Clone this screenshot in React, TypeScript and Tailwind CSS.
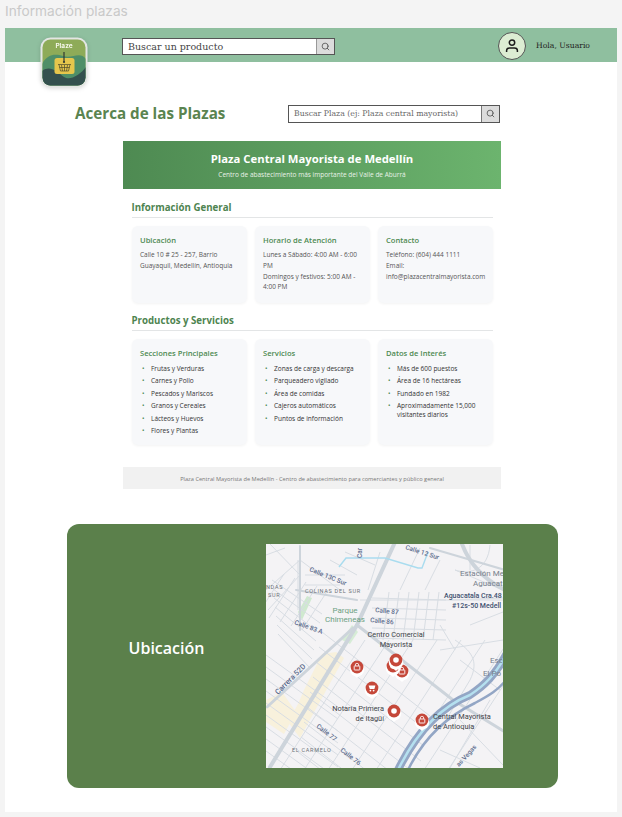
import type { ReactNode } from 'react';
import { Search } from 'lucide-react';

const sectionOne = [
  {
    title: 'Ubicación',
    lines: ['Calle 10 # 25 - 257, Barrio Guayaquil, Medellín, Antioquia'],
  },
  {
    title: 'Horario de Atención',
    lines: ['Lunes a Sábado: 4:00 AM - 6:00 PM', 'Domingos y festivos: 5:00 AM - 4:00 PM'],
  },
  {
    title: 'Contacto',
    lines: ['Teléfono: (604) 444 1111', 'Email:', 'info@plazacentralmayorista.com'],
  },
];

const sectionTwo = [
  {
    title: 'Secciones Principales',
    items: ['Frutas y Verduras', 'Carnes y Pollo', 'Pescados y Mariscos', 'Granos y Cereales', 'Lácteos y Huevos', 'Flores y Plantas'],
  },
  {
    title: 'Servicios',
    items: ['Zonas de carga y descarga', 'Parqueadero vigilado', 'Área de comidas', 'Cajeros automáticos', 'Puntos de información'],
  },
  {
    title: 'Datos de Interés',
    items: ['Más de 600 puestos', 'Área de 16 hectáreas', 'Fundado en 1982', 'Aproximadamente 15,000 visitantes diarios'],
  },
];

function Logo() {
  return (
    <svg width="48" height="51" viewBox="0 0 48 51" className="shrink-0 drop-shadow-sm">
      <defs>
        <clipPath id="logoClip">
          <rect x="2.5" y="2.5" width="43" height="46" rx="8" />
        </clipPath>
      </defs>
      <rect x="0.5" y="0.5" width="47" height="50" rx="10" fill="#e3e6e3" />
      <g clipPath="url(#logoClip)">
        <rect x="2" y="2" width="44" height="47" fill="#8eab58" />
        <path d="M2 27 C8 16 16 17 23 19 C32 22 40 14 46 22 L46 49 L2 49 Z" fill="#4f8f68" />
        <path d="M2 34 C10 28 16 34 24 40 C30 44 40 38 46 30 L46 49 L2 49 Z" fill="#34504e" />
      </g>
      <text x="24" y="11" textAnchor="middle" fontSize="6.5" fontWeight="700" fill="#f4f6e8" fontFamily="Inter, sans-serif">
        Plaze
      </text>
      <rect x="14.5" y="21" width="20" height="16" rx="2.5" fill="#e6c64c" />
      <path d="M24 15 V25" stroke="#2f3a33" strokeWidth="1.2" />
      <circle cx="24" cy="25" r="1.1" fill="#2f3a33" />
      <path
        d="M18 27.5 H31 M19 27.5 L20.5 34 H28.5 L30 27.5 M21.5 28 L22.5 34 M24.5 28 V34 M27.5 28 L26.5 34 M19.5 30.5 H29.5"
        stroke="#4d4a2a"
        strokeWidth="0.7"
        fill="none"
      />
    </svg>
  );
}

function UserIcon() {
  return (
    <svg width="16" height="16" viewBox="0 0 16 16" fill="none" stroke="#1c1c1c" strokeWidth="1.5">
      <circle cx="8" cy="4.6" r="2.7" />
      <path d="M2.6 14 V12.6 C2.6 10.8 4 10 5.6 10 H10.4 C12 10 13.4 10.8 13.4 12.6 V14" />
    </svg>
  );
}

function Pin({ x, y, kind }: { x: number; y: number; kind: 'lock' | 'cart' | 'dot' }) {
  return (
    <g>
      <circle cx={x} cy={y + 2.5} r="7.2" fill="#ffffff" />
      <path d={`M${x - 5} ${y + 6} L${x} ${y + 11} L${x + 5} ${y + 6} Z`} fill="#ffffff" />
      <circle cx={x} cy={y} r="6.4" fill="#c5483a" />
      {kind === 'dot' && <circle cx={x} cy={y} r="2.8" fill="#ffffff" />}
      {kind === 'lock' && (
        <g>
          <rect x={x - 2.8} y={y - 1} width="5.6" height="4" rx="0.5" fill="none" stroke="#ffffff" strokeWidth="0.9" />
          <path d={`M${x - 1.7} ${y - 1} V${y - 2} a1.7 1.7 0 0 1 3.4 0 V${y - 1}`} stroke="#ffffff" strokeWidth="0.8" fill="none" />
        </g>
      )}
      {kind === 'cart' && (
        <g>
          <path d={`M${x - 3.4} ${y - 2.6} H${x + 3.4} L${x + 2.4} ${y + 1} H${x - 2.2} Z`} fill="#ffffff" />
          <circle cx={x - 1.6} cy={y + 2.6} r="0.9" fill="#ffffff" />
          <circle cx={x + 1.6} cy={y + 2.6} r="0.9" fill="#ffffff" />
        </g>
      )}
    </g>
  );
}

// calles sueltas de la parte alta y de la esquina derecha
const minorRoads = [
  'M266 590 L300 560 L340 590', 'M270 544 L300 575', 'M300 575 L268 610', 'M298 560 V610',
  'M330 560 L357 575', 'M305 575 H345', 'M305 585 H340', 'M360 600 H503',
  'M380 552 L368 590', 'M420 548 L400 590', 'M440 560 L425 590', 'M450 600 L503 598', 'M455 570 L503 590', 'M470 545 V570',
  'M490 545 C488 570 470 575 455 570', 'M440 650 L503 640', 'M460 660 L500 690', 'M470 625 L503 612',
  'M470 680 L440 730', 'M490 700 L450 768', 'M460 720 L503 765', 'M440 750 L480 768', 'M455 640 C470 650 480 660 470 680',
  'M345 552 L375 565', 'M266 555 L285 548', 'M440 625 L455 650',
];

// barrio al oeste: calles diagonales y sus cruces
const westStreets = Array.from({ length: 7 }, (_, i) => {
  const y = 580 + i * 9;
  return `M${272 + i * 1} ${y} L${322 - i * 2} ${y + 34}`;
});
const westCross = Array.from({ length: 5 }, (_, i) => {
  const x = 284 + i * 11;
  return `M${x} ${574 + i * 4} L${x - 26} ${614 + i * 4}`;
});

// rejilla junto a Calle 87
const gridV = Array.from({ length: 6 }, (_, i) => {
  const x = 386 + i * 10;
  return `M${x + 3} 592 L${x - 3} 640`;
});
const gridH = Array.from({ length: 5 }, (_, i) => {
  const y = 598 + i * 10;
  return `M372 ${y} L446 ${y + 2}`;
});

// barrio al sur: calles paralelas a la vía principal y sus cruces
const southStreets = Array.from({ length: 9 }, (_, i) => {
  const y = 632 + i * 15;
  return `M${322 - i * 3} ${y} L${430 - i * 3} ${y + 84}`;
});
const southCross = Array.from({ length: 8 }, (_, i) => {
  const x = 365 + i * 24;
  return `M${x} 640 L${x - 85} 770`;
});
const carmeloStreets = Array.from({ length: 9 }, (_, i) => {
  const y = 655 + i * 12;
  return `M266 ${y} L338 ${y + 52}`;
});

const yellowBlocks = [
  'M322 654 L336 652 L344 658 L312 716 L300 738 L288 722 L298 704 L304 690 L314 670 Z',
  'M266 700 L282 692 L296 712 L284 734 L266 722 Z',
];

function MapImage() {
  return (
    <svg viewBox="266 544 237 224" className="h-[224px] w-[237px] shrink-0" fontFamily="Roboto, sans-serif">
      <rect x="266" y="544" width="237" height="224" fill="#f4f3f5" />
      {yellowBlocks.map((d) => (
        <path key={d} d={d} fill="#f8f1dc" />
      ))}
      <path d="M298 612 L307 596 L312 598 L302 620 Z" fill="#cfe9cf" />
      <path d="M342 640 L352 625 L358 632 L350 644 Z" fill="#d6ecd6" />
      <g fill="none" stroke="#d8dde3" strokeWidth="1">
        {[...minorRoads, ...westStreets, ...westCross, ...gridV, ...gridH, ...southStreets, ...southCross, ...carmeloStreets].map((d) => (
          <path key={d} d={d} />
        ))}
      </g>
      <g fill="none" stroke="#cdd4db" strokeLinecap="round">
        <path d="M396 540 L357 625 L270 767" strokeWidth="4" />
        <path d="M353 628 L267 707" strokeWidth="3" />
        <path d="M357 625 L453 700 L505 732" strokeWidth="3" />
        <path d="M300 546 V630" strokeWidth="2" />
        <path d="M296 590 L357 600" strokeWidth="2" />
        <path d="M462 544 C470 565 485 580 505 590" strokeWidth="4" />
        <path d="M430 548 L505 570" strokeWidth="2" />
      </g>
      <path d="M339 567 L346 558 H385 L418 568 L422 568 L428 552" fill="none" stroke="#a9dcef" strokeWidth="1.4" />
      <g fill="none" strokeLinecap="round">
        <path d="M398 770 C420 725 445 705 470 695 C485 685 495 675 506 655" stroke="#93a6c5" strokeWidth="8" />
        <path d="M398 770 C420 725 445 705 470 695 C485 685 495 675 506 655" stroke="#b5e0ef" strokeWidth="2.5" />
        <path d="M408 770 C425 735 450 715 475 703 C490 695 498 690 506 680" stroke="#93a6c5" strokeWidth="2.5" />
      </g>

      <g fontSize="6.5" fill="#5b6b8c" fontWeight="500">
        <text transform="translate(309 571) rotate(22)">Calle 13C Sur</text>
        <text transform="translate(405 549) rotate(18)">Calle 12 Sur</text>
        <text transform="translate(375 612) rotate(6)">Calle 87</text>
        <text transform="translate(370 622) rotate(6)">Calle 86</text>
        <text transform="translate(294 624) rotate(20)">Calle 83 A</text>
        <text transform="translate(278 695) rotate(-45)" fontSize="7.5">Carrera 52D</text>
        <text transform="translate(316 727) rotate(38)">Calle 77</text>
        <text transform="translate(340 751) rotate(38)">Calle 76</text>
        <text transform="translate(459 767) rotate(-48)">as Vegas</text>
        <text transform="translate(362 558) rotate(-90)">Car</text>
      </g>
      <g fontSize="5.5" fill="#6d7278" letterSpacing="0.7">
        <text x="305" y="593">COLINAS DEL SUR</text>
        <text x="266" y="589">NDAS</text>
        <text x="268" y="597">SUR</text>
        <text x="292" y="752">EL CARMELO</text>
      </g>
      <g fontSize="8" fill="#6da184" textAnchor="middle">
        <text x="345" y="613">Parque</text>
        <text x="345" y="622">Chimeneas</text>
      </g>
      <g fontSize="7.4" fill="#3f4449" textAnchor="middle">
        <text x="396" y="637">Centro Comercial</text>
        <text x="396" y="647">Mayorista</text>
      </g>
      <g fontSize="7.4" fill="#3f4449" textAnchor="end">
        <text x="384" y="711">Notaría Primera</text>
        <text x="384" y="721">de Itagüí</text>
      </g>
      <g fontSize="7.4" fill="#3f4449">
        <text x="433" y="719">Central Mayorista</text>
        <text x="433" y="729">de Antioquia</text>
      </g>
      <g fontSize="8" fill="#77808c">
        <text x="460" y="576">Estación Me</text>
        <text x="473" y="586">Aguacat</text>
        <text x="490" y="663">Esc</text>
        <text x="483" y="676">El Po</text>
      </g>
      <g fontSize="7" fill="#3f5170" fontWeight="500">
        <text x="444" y="598">Aguacatala Cra.48</text>
        <text x="452" y="608">#12s-50 Medell</text>
      </g>

      <Pin x={357} y={667} kind="lock" />
      <Pin x={372} y={688} kind="cart" />
      <Pin x={394} y={711} kind="dot" />
      <Pin x={422} y={720} kind="lock" />
      <Pin x={402} y={671} kind="lock" />
      <Pin x={393} y={666} kind="dot" />
      <Pin x={396} y={660} kind="dot" />
    </svg>
  );
}

function Card({ title, children }: { title: string; children: ReactNode }) {
  return (
    <div className="rounded-[6px] bg-[#f7f8fa] px-[8.5px] pt-[8px] pb-[5px] shadow-[0_1px_3px_rgba(0,0,0,0.05)]">
      <h4 className="mb-[5px] text-[7.6px] leading-[12px] font-semibold text-[#4e8a52]">{title}</h4>
      {children}
    </div>
  );
}

function SectionTitle({ children }: { children: string }) {
  return (
    <h3 className="mb-[8px] border-b border-[#e3e5e6] pt-[1px] pb-[2px] text-[9.7px] leading-[14px] font-bold text-[#4e8450]">
      {children}
    </h3>
  );
}

export default function App() {
  return (
    <div className="h-[817px] overflow-hidden bg-[#f4f4f4] px-[5px] font-['Open_Sans',sans-serif]">
      <div className="flex h-[28px] items-start font-['Inter',sans-serif] text-[13.7px] leading-[22px] text-[#c9c9c9]">
        Información plazas
      </div>

      <div className="h-[784px] w-[612px] bg-white">
        <header className="flex h-[34px] items-start bg-[#8fbf9f] pr-[27px] pl-[35px] font-['DejaVu_Serif',serif]">
          <div className="mt-[9px]">
            <Logo />
          </div>
          <div className="mt-[10px] ml-[34px] flex h-[17px] w-[213px] border border-[#555] bg-white">
            <div className="flex-1 pl-[5px] text-[9.5px] leading-[16px] text-[#444]">Buscar un producto</div>
            <div className="flex w-[18px] items-center justify-center border-l border-[#999] bg-[#dcdcdc]">
              <Search size={9} strokeWidth={2} color="#444" />
            </div>
          </div>
          <div className="mt-[4px] ml-auto flex items-center">
            <div className="flex h-[28px] w-[28px] items-center justify-center rounded-full border border-[#555] bg-[#dcedd3]">
              <UserIcon />
            </div>
            <span className="ml-[10px] text-[7.7px] leading-[28px] text-[#222]">Hola, Usuario</span>
          </div>
        </header>

        <div className="mt-[43px] flex h-[17px] items-center pr-[117px] pl-[70px]">
          <h1 className="text-[15.2px] leading-[17px] font-bold text-[#5a8450]">Acerca de las Plazas</h1>
          <div className="ml-auto flex h-[18px] w-[212px] border border-[#555] bg-white font-['DejaVu_Serif',serif]">
            <div className="flex-1 pl-[5px] text-[7.75px] leading-[16px] text-[#666]">Buscar Plaza (ej: Plaza central mayorista)</div>
            <div className="flex w-[18px] items-center justify-center border-l border-[#777] bg-[#dcdcdc]">
              <Search size={9} strokeWidth={2} color="#444" />
            </div>
          </div>
        </div>

        <div className="mt-[19px] ml-[118px] w-[378px]">
          <div className="h-[48px] bg-gradient-to-r from-[#4e8a52] to-[#6cb46e] pt-[9px] text-center text-white">
            <h2 className="text-[11.3px] leading-[17px] font-bold">Plaza Central Mayorista de Medellín</h2>
            <p className="mt-[3px] text-[6.5px] leading-[10px] text-[#e8f2e8]">Centro de abastecimiento más importante del Valle de Aburrá</p>
          </div>

          <div className="px-[8.5px] pt-[11px]">
            <SectionTitle>Información General</SectionTitle>
            <div className="grid h-[77px] grid-cols-3 gap-[8px]">
              {sectionOne.map((card) => (
                <Card key={card.title} title={card.title}>
                  <div className="-mt-[1px] text-[6.5px] leading-[10.8px] text-[#555]">
                    {card.lines.map((line) => (
                      <p key={line}>{line}</p>
                    ))}
                  </div>
                </Card>
              ))}
            </div>

            <div className="mt-[10px]">
              <SectionTitle>Productos y Servicios</SectionTitle>
            </div>
            <div className="grid h-[106px] grid-cols-3 gap-[8px]">
              {sectionTwo.map((card) => (
                <Card key={card.title} title={card.title}>
                  <ul className="text-[6.5px] leading-[9px] text-[#333]">
                    {card.items.map((item) => (
                      <li key={item} className="mb-[3.4px] flex">
                        <span className="w-[11px] shrink-0 pl-[2px] text-[#4e8a52]">•</span>
                        <span>{item}</span>
                      </li>
                    ))}
                  </ul>
                </Card>
              ))}
            </div>
          </div>

          <div className="mt-[22px] h-[22px] bg-[#f1f1f1] pt-[7px] text-center text-[5.67px] leading-[10px] text-[#777]">
            Plaza Central Mayorista de Medellín - Centro de abastecimiento para comerciantes y público general
          </div>
        </div>

        <section className="mt-[35px] ml-[62px] flex h-[264px] w-[491px] items-center rounded-[12px] bg-[#5b804b]">
          <h2 className="mb-[16px] w-[199px] text-center text-[16px] font-semibold text-white">Ubicación</h2>
          <MapImage />
        </section>
      </div>
    </div>
  );
}
